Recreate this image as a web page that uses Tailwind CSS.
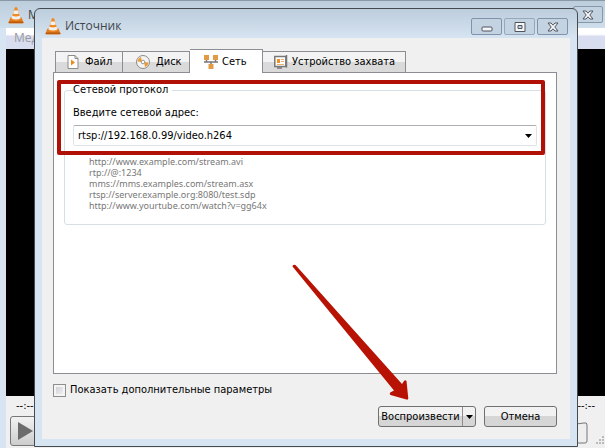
<!DOCTYPE html>
<html lang="ru">
<head>
  <meta charset="UTF-8" />
  <meta name="viewport" content="width=device-width, initial-scale=1.0" />
  <title>Источник</title>
  <script src="https://cdn.jsdelivr.net/npm/@tailwindcss/browser@4"></script>
</head>
<body class="relative h-screen overflow-hidden bg-[#d7e4f1] font-['DejaVu_Sans_Condensed','DejaVu_Sans',sans-serif] text-[11px] leading-4 text-black">
  <svg class="hidden">
    <symbol id="cone" viewBox="0 0 16 18">
      <path d="M2.500 11.500h11l2 5q0 1-1 1h-13q-1 0-1-1z" fill="#e07a1c" />
      <path d="M1 15.500h14l.5 1.500h-15z" fill="#b95a10" />
      <path d="M6.800 1.500q1.200-1 2.400 0l3.600 12q-4.800 2.400-9.600 0z" fill="#ef8a25" />
      <path d="M6 4.500h4l.9 3q-2.900 1.200-5.800 0zM4.300 9.800q3.700 1.400 7.400 0l.8 2.600q-4.500 2-9 0z" fill="#f3f1ee" />
    </symbol>
    <symbol id="close" viewBox="0 0 12 10">
      <path d="M1 1h3l2 2.200L8 1h3L7.800 5 11 9H8L6 6.800 4 9H1l3.200-4z" fill="#f5f6f8" stroke="#50545f" />
    </symbol>
  </svg>

  <!-- player window -->
  <div class="flex h-full flex-col border-t border-[#8b98a5]">
    <header class="flex h-[27px] shrink-0 items-center bg-linear-to-b from-[#bccddc] to-[#cfdeeb] pl-2 pr-0.5">
      <svg class="mr-1 h-[18px] w-4"><use href="#cone" /></svg>
      <span class="flex-1 font-['Open_Sans',sans-serif] text-[12px] text-[#444]">M</span>
      <button aria-label="Закрыть плеер" class="flex h-[17px] w-[30px] items-center justify-center rounded-[2px] border border-[#8797aa] bg-[#c3d2e1]">
        <svg class="h-[10px] w-3"><use href="#close" /></svg>
      </button>
    </header>
    <div class="flex min-h-0 flex-1 flex-col pl-1.5">
      <nav class="h-[21px] shrink-0 bg-linear-to-b from-white from-30% to-[#d8ddef] to-40% pl-2 pt-0.5 font-['Open_Sans',sans-serif] text-[12px] text-[#9a9a9f]">Мед</nav>
      <div class="flex-1 bg-black"></div>
      <footer class="h-[52px] shrink-0 bg-[#f0f0f0]">
        <div class="flex justify-between pl-[10px] pr-[10px] pt-0.5"><span>--:--</span><span>--:--</span></div>
        <div class="flex items-end justify-between pl-1 pr-px pt-0.5">
          <button aria-label="Воспроизведение" class="flex h-[30px] w-9 items-center rounded-[3px] border border-[#777] bg-linear-to-b from-[#f2f2f2] to-[#cdcdcd] pl-[7px]">
            <svg class="h-[18px] w-[15px]" viewBox="0 0 15 18"><path d="M0 0l15 9L0 18z" fill="#6b6b6b" /></svg>
          </button>
          <svg class="h-[26px] w-11" viewBox="0 0 44 26">
            <path d="M0 6L24 3q3-1 3 2v16q0 2-2 2H0z" fill="#eee" stroke="#777" />
            <path d="M42 16h2v2h-2zM39 19h2v2h-2zM42 19h2v2h-2zM36 22h2v2h-2zM39 22h2v2h-2zM42 22h2v2h-2z" fill="#bbb" />
          </svg>
        </div>
      </footer>
    </div>
  </div>

  <!-- open media dialog -->
  <div role="dialog" aria-labelledby="dialog-title" class="absolute bottom-px left-[34px] right-[27px] top-2 flex flex-col rounded-t-[6px] border border-[#464b52] bg-[#d7e4f1] bg-linear-to-b from-[#bccddc] to-[#d7e4f1] to-[29px] px-[7px] pb-[7px]">
    <header class="flex h-[29px] shrink-0 items-start pl-[3px] pr-0.5">
      <svg class="mt-2 mr-1 h-[18px] w-4"><use href="#cone" /></svg>
      <h1 id="dialog-title" class="flex-1 pt-[9px] font-['Open_Sans',sans-serif] text-[12px] text-[#3f454c]">Источник</h1>
      <div class="flex gap-0.5 pt-[9px]">
        <button aria-label="Свернуть" class="flex h-[17px] w-[31px] items-center justify-center rounded-[2px] border border-[#8193ab] bg-[#c3d3e2]">
          <svg class="h-[10px] w-3" viewBox="0 0 12 10"><rect x="1" y="5" width="10" height="4" rx="1" fill="#f5f6f8" stroke="#50545f" /></svg>
        </button>
        <button aria-label="Развернуть" class="flex h-[17px] w-[31px] items-center justify-center rounded-[2px] border border-[#98a8ba] bg-[#c3d3e2]">
          <svg class="h-[10px] w-3" viewBox="0 0 12 10"><path d="M1 .5h10v9H1zM4 3.500v3h4v-3z" fill="#f5f6f8" fill-rule="evenodd" stroke="#50545f" /></svg>
        </button>
        <button aria-label="Закрыть" class="flex h-[17px] w-[31px] items-center justify-center rounded-[2px] border border-[#8193ab] bg-[#c3d3e2]">
          <svg class="h-[10px] w-3"><use href="#close" /></svg>
        </button>
      </div>
    </header>

    <form class="flex min-h-0 flex-1 flex-col bg-[#f0f0f0] pb-3 pl-[11px] pr-[13px] pt-[11px]">
      <div role="tablist" class="flex h-[23px] shrink-0 items-end pl-0.5">
        <button type="button" role="tab" class="flex h-[21px] w-[68px] items-center gap-1.5 border border-b-0 border-[#8c8e94] bg-linear-to-b from-[#f3f3f3] from-50% to-[#dadada] to-50% pl-[11px]">
          <svg class="h-[14px] w-3" viewBox="0 0 12 14"><path d="M1 .5h7l3 3v10H1z" fill="#fdfdfd" stroke="#8b8b8b" /><path d="M8 .5v3h3" fill="none" stroke="#8b8b8b" /><path d="M4 4.500l4 3-4 3z" fill="#f08a1c" /></svg>
          Файл
        </button>
        <button type="button" role="tab" class="flex h-[21px] w-[67px] items-center gap-1.5 border-r border-t border-[#8c8e94] bg-linear-to-b from-[#f3f3f3] from-50% to-[#dadada] to-50% pl-[13px]">
          <svg class="h-[14px] w-[14px]" viewBox="0 0 14 14"><circle cx="7" cy="7" r="6.500" fill="#f4f4f4" stroke="#8b8b8b" /><path d="M6 7L1.500 6.500Q2 3 5 2zM8 7l4.500.5Q12 11 9 12z" fill="#ee9a33" /><circle cx="7" cy="7" r="1.800" fill="#fff" stroke="#999" /></svg>
          Диск
        </button>
        <button type="button" role="tab" aria-selected="true" class="relative z-10 -mb-px flex h-6 w-[73px] items-center gap-1 border-r border-t border-[#8c8e94] bg-white pl-[14px]">
          <svg class="h-[14px] w-[14px]" viewBox="0 0 14 14"><path d="M0 7h14M2.500 5v2M11.500 5v2M7 7v3" fill="none" stroke="#777" stroke-width="1.500" /><path d="M0 0h5v5H0zM9 0h5v5H9zM4.500 9h5v5h-5z" fill="#e39a45" /></svg>
          Сеть
        </button>
        <button type="button" role="tab" class="flex h-[21px] w-[143px] items-center gap-1 whitespace-nowrap border-r border-t border-[#8c8e94] bg-linear-to-b from-[#f3f3f3] from-50% to-[#dadada] to-50% pl-[11px]">
          <svg class="h-[14px] w-[14px] shrink-0" viewBox="0 0 14 14"><path d="M.8 1.500h11v10h-11z" fill="#fff" stroke="#777" stroke-width="1.500" /><path d="M12.500 0v12.500M3 13h5" stroke="#777" stroke-width="1.500" /><path d="M3 4h3v4H3z" fill="#ef8f2a" /><path d="M7 4.500h3M7 6.500h3M3 9.500h7" stroke="#eeb070" /></svg>
          Устройство захвата
        </button>
      </div>

      <div role="tabpanel" class="relative min-h-0 flex-1 border border-[#8c8e94] bg-white px-[10px] pt-[9px]">
        <fieldset class="rounded-[3px] border border-[#d5dfe5] px-2 pb-[13px]">
          <legend class="pr-1">Сетевой протокол</legend>
          <label for="address" class="block pt-[7px]">Введите сетевой адрес:</label>
          <div class="mt-1 flex h-[21px] items-center rounded-[2px] border border-[#dfe3e8] border-t-[#abadb3]">
            <input id="address" type="text" value="rtsp://192.168.0.99/video.h264" class="h-full min-w-0 flex-1 pl-1 outline-none" />
            <button type="button" aria-label="Показать список" class="flex h-full w-4 items-center justify-center">
              <svg class="h-1 w-[7px]" viewBox="0 0 7 4"><path d="M0 0h7L3.500 4z" /></svg>
            </button>
          </div>
          <div class="pl-4 pt-[10px] font-['Noto_Sans',sans-serif] text-[9px] leading-[11px] text-[#777]">
            <p>http://www.example.com/stream.avi</p>
            <p>rtp://@:1234</p>
            <p>mms://mms.examples.com/stream.asx</p>
            <p>rtsp://server.example.org:8080/test.sdp</p>
            <p>http://www.yourtube.com/watch?v=gg64x</p>
          </div>
        </fieldset>
        <!-- highlight around the address -->
        <div class="pointer-events-none absolute left-[3px] right-[11px] top-[7px] h-[75px] rounded-[2px] border-4 border-[#b01005]"></div>
      </div>

      <label class="mt-2 flex h-4 shrink-0 items-center gap-1">
        <input type="checkbox" class="h-[13px] w-[13px] appearance-none border border-[#8e8f8f] bg-linear-to-br from-[#c6cbd2] to-[#f6f6f6] shadow-[inset_0_0_0_2px_#f4f4f4]" />
        Показать дополнительные параметры
      </label>
      <div class="mt-2 flex shrink-0 justify-end gap-2">
        <div class="flex h-[21px] w-[98px] overflow-hidden rounded-[3px] border border-[#707070] bg-linear-to-b from-[#f2f2f2] from-50% to-[#d6d6d6] to-50%">
          <button type="submit" class="flex-1">Воспроизвести</button>
          <button type="button" aria-label="Другие действия" class="flex w-[13px] items-center justify-center border-l border-[#8e8e8e]">
            <svg class="h-1 w-[7px]" viewBox="0 0 7 4"><path d="M0 0h7L3.500 4z" /></svg>
          </button>
        </div>
        <button type="button" class="h-[21px] w-[73px] rounded-[3px] border border-[#707070] bg-linear-to-b from-[#f2f2f2] from-50% to-[#d6d6d6] to-50%">Отмена</button>
      </div>
    </form>
  </div>

  <!-- arrow to the play button -->
  <svg class="pointer-events-none absolute bottom-[46px] right-[195px] h-[138px] w-[118px]" viewBox="0 0 118 138">
    <path d="M.5 2.500q0-2.500 3-1.500L110 120l2-3q1-1.500 2.500 0l1.800 17.500q-.3 1.500-1.800 1L98.500 131q-1.500-1-.3-2.500l3.800-2z" fill="#b81204" />
  </svg>
</body>
</html>
